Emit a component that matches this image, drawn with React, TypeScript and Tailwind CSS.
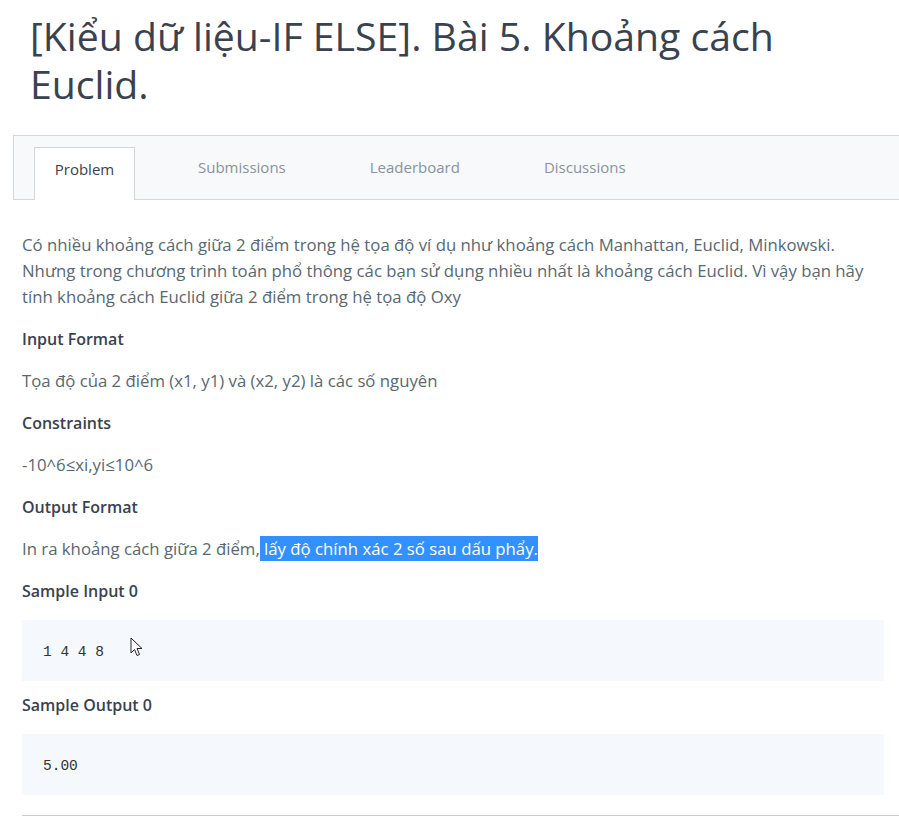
import React from "react";

const font = { fontFamily: '"Open Sans", "Noto Sans", sans-serif' };

function Heading({ children }: { children: React.ReactNode }) {
  return <div className="text-[16px] leading-[26px] font-semibold text-[#39424e]">{children}</div>;
}

function Para({ children }: { children: React.ReactNode }) {
  return <div className="text-[16.75px] leading-[26px] text-[#576871]">{children}</div>;
}

function Code({ children, cursor }: { children: React.ReactNode; cursor?: boolean }) {
  return (
    <div className="relative h-[61px] bg-[#f5f9fd] pl-[21px] pt-[4px] flex items-center">
      <span className="text-[14.5px] text-[#333] whitespace-pre" style={{ fontFamily: '"Liberation Mono", "DejaVu Sans Mono", monospace' }}>
        {children}
      </span>
      {cursor && (
        <svg className="absolute left-[108px] top-[17px]" width="13" height="20" viewBox="0 0 13 20">
          <path d="M1 1 L1 16 L4.5 12.5 L7 18.5 L9.5 17.5 L7 11.5 L12 11.5 Z" fill="#fff" stroke="#222" strokeWidth="1" strokeLinejoin="round" />
        </svg>
      )}
    </div>
  );
}

export default function App() {
  return (
    <div className="w-[899px] h-[816px] overflow-hidden bg-white" style={font}>
      <h1 className="pl-[30px] pt-[12px] pr-[20px] text-[39.2px] leading-[48px] font-normal text-[#39424e]">
        [Kiểu dữ liệu-IF ELSE]. Bài 5. Khoảng cách Euclid.
      </h1>
      <div className="ml-[13px] mt-[27px] h-[65px] w-[900px] border border-[#d3d6da] bg-[#f8f9fa] flex items-end pl-[20px] gap-[42px]">
        <div className="h-[53px] w-[101px] -mb-px bg-white border border-b-0 border-[#d3d6da] flex justify-center pt-[10px] text-[15px] text-[#39424e]">
          Problem
        </div>
        <div className="h-[53px] px-[21px] flex pt-[10px] text-[15px] text-[#8a929c]">Submissions</div>
        <div className="h-[53px] px-[21px] flex pt-[10px] text-[15px] text-[#8a929c]">Leaderboard</div>
        <div className="h-[53px] px-[21px] flex pt-[10px] text-[15px] text-[#8a929c]">Discussions</div>
      </div>
      <div className="ml-[22px] w-[862px] pt-[32px] flex flex-col">
        <Para>
          Có nhiều khoảng cách giữa 2 điểm trong hệ tọa độ ví dụ như khoảng cách Manhattan, Euclid, Minkowski. Nhưng trong chương trình toán phổ thông các bạn sử dụng nhiều nhất là khoảng cách Euclid. Vì vậy bạn hãy tính khoảng cách Euclid giữa 2 điểm trong hệ tọa độ Oxy
        </Para>
        <div className="mt-[16px]"><Heading>Input Format</Heading></div>
        <div className="mt-[16px]"><Para>Tọa độ của 2 điểm (x1, y1) và (x2, y2) là các số nguyên</Para></div>
        <div className="mt-[16px]"><Heading>Constraints</Heading></div>
        <div className="mt-[16px]"><Para>-10^6≤xi,yi≤10^6</Para></div>
        <div className="mt-[16px]"><Heading>Output Format</Heading></div>
        <div className="mt-[16px]">
          <Para>
            In ra khoảng cách giữa 2 điểm,<span className="bg-[#3390ff] text-white py-[1px]"> lấy độ chính xác 2 số sau dấu phẩy.</span>
          </Para>
        </div>
        <div className="mt-[16px]"><Heading>Sample Input 0</Heading></div>
        <div className="mt-[16px]"><Code cursor>1 4 4 8</Code></div>
        <div className="mt-[11px]"><Heading>Sample Output 0</Heading></div>
        <div className="mt-[16px]"><Code>5.00</Code></div>
      </div>
      <div className="ml-[22px] mt-[20px] h-[2px] bg-[#c9cdd1]" />
    </div>
  );
}
